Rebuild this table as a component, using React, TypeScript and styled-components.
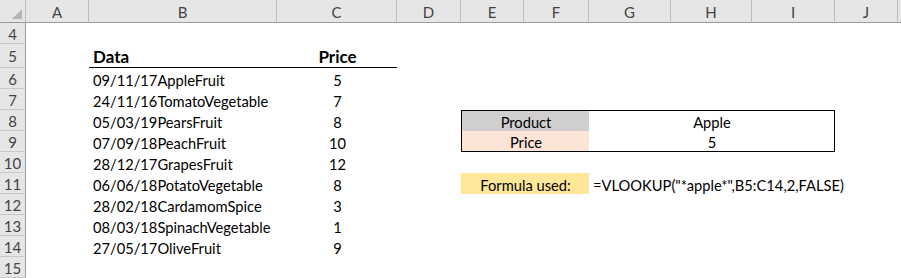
import styled, { createGlobalStyle } from "styled-components";

const GlobalStyle = createGlobalStyle`
  html, body {
    margin: 0;
    padding: 0;
    background: #ffffff;
  }
  body {
    font-family: Lato, "Liberation Sans", Arial, sans-serif;
    color: #000;
  }
`;

type ColKey = "A" | "B" | "C" | "D" | "E" | "F" | "G" | "H" | "I" | "J" | "K";

const COLUMNS: { key: ColKey; width: string }[] = [
  { key: "A", width: "63px" },
  { key: "B", width: "188px" },
  { key: "C", width: "120px" },
  { key: "D", width: "64px" },
  { key: "E", width: "63px" },
  { key: "F", width: "65px" },
  { key: "G", width: "82px" },
  { key: "H", width: "81px" },
  { key: "I", width: "83px" },
  { key: "J", width: "63px" },
  { key: "K", width: "1fr" },
];

interface CellSpec {
  text?: string;
  span?: number;
  align?: "left" | "center";
  bold?: boolean;
  bg?: string;
  box?: string; // which edges get the black table border: t r b l
  rule?: boolean;
  big?: boolean;
}

interface RowSpec {
  n: number;
  height: number;
  cells: Partial<Record<ColKey, CellSpec>>;
}

const items: [string, number][] = [
  ["09/11/17AppleFruit", 5],
  ["24/11/16TomatoVegetable", 7],
  ["05/03/19PearsFruit", 8],
  ["07/09/18PeachFruit", 10],
  ["28/12/17GrapesFruit", 12],
  ["06/06/18PotatoVegetable", 8],
  ["28/02/18CardamomSpice", 3],
  ["08/03/18SpinachVegetable", 1],
  ["27/05/17OliveFruit", 9],
];

const rows: RowSpec[] = [
  { n: 4, height: 21, cells: {} },
  {
    n: 5,
    height: 24,
    cells: {
      B: { text: "Data", bold: true, big: true, rule: true },
      C: { text: "Price", bold: true, big: true, rule: true, align: "center" },
    },
  },
  ...items.map(([label, price], i) => ({
    n: 6 + i,
    height: 21,
    cells: {
      B: { text: label },
      C: { text: String(price), align: "center" },
    } as Partial<Record<ColKey, CellSpec>>,
  })),
  { n: 15, height: 21, cells: {} },
];

// lookup table and formula note
rows[4].cells.E = { text: "Product", span: 2, align: "center", bg: "#d0cece", box: "tl" };
rows[4].cells.G = { text: "Apple", span: 3, align: "center", box: "tr" };
rows[5].cells.E = { text: "Price", span: 2, align: "center", bg: "#fce4d6", box: "bl" };
rows[5].cells.G = { text: "5", span: 3, align: "center", box: "br" };
rows[7].cells.E = { text: "Formula used:", span: 2, align: "center", bg: "#ffe699" };
rows[7].cells.G = { text: '=VLOOKUP("*apple*",B5:C14,2,FALSE)', span: 4 };

const Sheet = styled.div<{ $rows: string }>`
  display: grid;
  grid-template-columns: 26px ${COLUMNS.map((c) => c.width).join(" ")};
  grid-template-rows: 23px ${(p) => p.$rows};
  width: 901px;
  height: 278px;
  overflow: hidden;
  font-size: 15px;
`;

const Corner = styled.div`
  background: #e6e6e6;
  border-right: 1px solid #bdbdbd;
  border-bottom: 1px solid #9b9b9b;
  display: flex;
  align-items: flex-end;
  justify-content: flex-end;
  padding: 0 3px 3px 0;
`;

const ColHead = styled.div`
  box-sizing: border-box;
  background: #e6e6e6;
  border-right: 1px solid #bdbdbd;
  border-bottom: 1px solid #9b9b9b;
  color: #444;
  display: flex;
  align-items: center;
  justify-content: center;
  padding-top: 2px;
`;

const RowHead = styled.div`
  box-sizing: border-box;
  background: #e6e6e6;
  border-right: 1px solid #9b9b9b;
  border-bottom: 1px solid #c8c8c8;
  color: #444;
  display: flex;
  align-items: center;
  justify-content: center;
  padding-top: 1px;
`;

const Cell = styled.div<{
  $span: number;
  $align: "left" | "center";
  $bold: boolean;
  $big: boolean;
  $bg: string;
  $box: string;
  $rule: boolean;
}>`
  box-sizing: border-box;
  grid-column: span ${(p) => p.$span};
  display: flex;
  align-items: flex-end;
  justify-content: ${(p) => (p.$align === "center" ? "center" : "flex-start")};
  padding: 0 3px ${(p) => (p.$big ? "2px" : "0")} 4px;
  white-space: nowrap;
  background: ${(p) => p.$bg};
  font-weight: ${(p) => (p.$bold ? 700 : 400)};
  font-size: ${(p) => (p.$big ? "17px" : "14.7px")};
  line-height: 17px;
  border-top: ${(p) => (p.$box.includes("t") ? "1px solid #000" : "none")};
  border-left: ${(p) => (p.$box.includes("l") ? "1px solid #000" : "none")};
  border-right: ${(p) => (p.$box.includes("r") ? "1px solid #000" : "none")};
  border-bottom: ${(p) =>
    p.$box.includes("b") || p.$rule ? "1px solid #000" : "none"};
`;

const CornerMark = () => (
  <svg width="10" height="10" viewBox="0 0 10 10">
    <polygon points="10,0 10,10 0,10" fill="#b5b5b5" />
  </svg>
);

const renderRow = (row: RowSpec) => {
  const out = [<RowHead key={`h${row.n}`}>{row.n}</RowHead>];
  let i = 0;
  while (i < COLUMNS.length) {
    const col = COLUMNS[i].key;
    const spec = row.cells[col] || {};
    const span = spec.span || 1;
    out.push(
      <Cell
        key={`${col}${row.n}`}
        $span={span}
        $align={spec.align || "left"}
        $bold={!!spec.bold}
        $big={!!spec.big}
        $bg={spec.bg || "transparent"}
        $box={spec.box || ""}
        $rule={!!spec.rule}
      >
        {spec.text}
      </Cell>
    );
    i += span;
  }
  return out;
};

export default function App() {
  return (
    <>
      <GlobalStyle />
      <Sheet $rows={rows.map((r) => `${r.height}px`).join(" ")}>
        <Corner>
          <CornerMark />
        </Corner>
        {COLUMNS.map((c) => (
          <ColHead key={c.key}>{c.key === "K" ? "" : c.key}</ColHead>
        ))}
        {rows.map(renderRow)}
      </Sheet>
    </>
  );
}
